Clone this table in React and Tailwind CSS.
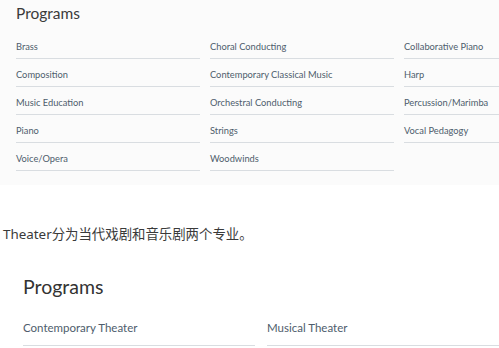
const music = [
  "Brass",
  "Choral Conducting",
  "Collaborative Piano",
  "Composition",
  "Contemporary Classical Music",
  "Harp",
  "Music Education",
  "Orchestral Conducting",
  "Percussion/Marimba",
  "Piano",
  "Strings",
  "Vocal Pedagogy",
  "Voice/Opera",
  "Woodwinds",
];

const theater = ["Contemporary Theater", "Musical Theater"];

export default function App() {
  return (
    <main className="h-[348px] w-[499px] overflow-hidden bg-white font-['Lato','Noto_Sans_CJK_SC',sans-serif]">
      <section className="bg-[#fbfbfb] pb-[14px] pl-[16px] pt-[3px]">
        <h2 className="mb-[8px] text-[15.5px] leading-[20px] text-[#3a3a3a]">Programs</h2>
        <ul className="grid w-[600px] grid-cols-[184px_184px_184px] gap-x-[10px]">
          {music.map((name) => (
            <li
              key={name}
              className="border-b border-[#d9dde1] pb-[5px] pt-[10px] text-[9.3px] leading-[12px] text-[#4e5d6c]"
            >
              {name}
            </li>
          ))}
        </ul>
      </section>

      <p className="mt-[41px] pl-[3px] font-['Noto_Sans','Noto_Sans_CJK_SC',sans-serif] text-[13.4px] leading-[16px] text-[#3a3a3a]">
        Theater分为当代戏剧和音乐剧两个专业。
      </p>

      <section className="pl-[23px] pt-[33px]">
        <h2 className="mb-[18px] text-[19.5px] leading-[24px] text-[#333]">Programs</h2>
        <ul className="grid grid-cols-[232px_232px] gap-x-[12px]">
          {theater.map((name) => (
            <li
              key={name}
              className="border-b border-[#d9dde1] pb-[10px] pt-[4px] text-[11.5px] leading-[14px] text-[#4e5d6c]"
            >
              {name}
            </li>
          ))}
        </ul>
      </section>
    </main>
  );
}
